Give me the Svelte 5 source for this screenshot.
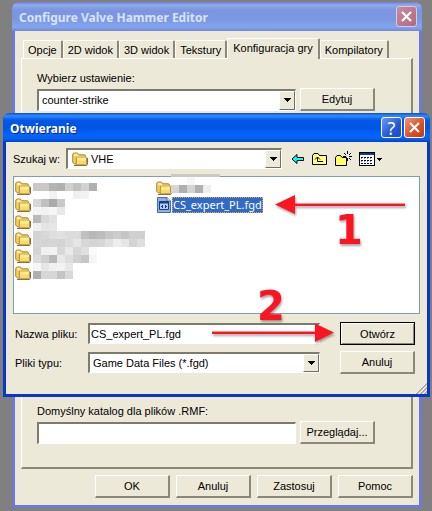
<script>
  const tabs = ['Opcje', '2D widok', '3D widok', 'Tekstury', 'Konfiguracja gry', 'Kompilatory'];
  const footer = ['OK', 'Anuluj', 'Zastosuj', 'Pomoc'];
  let activeTab = 'Konfiguracja gry';
  let rmfDir = '';
  let mapDir = '';
  let fileName = 'CS_expert_PL.fgd';

  // grey levels of the blurred names, one 8px cell each
  const leftCells = [
    'c8 c8 b4 b0 d0 c2 d2 b0',
    '-- -- f2 -- -- f0 f2',
    'd8 c0 aa c8',
    'f4 f2 f6 e8',
    'b8 d8 e2',
    'f0 e4 e6',
    'd4 d8 de e0 dc dc c0 b8 bc c6 cc c6 d0 d0',
    'd6 d4 d6 d4 dc e6 d8 d4 d6 e0 ee e6 d4 de',
    'd4 f0 f2 d8 e8 d6 e0 fa',
    'dc d0 b8 e8 de d0 c6 f6',
    'f6 e6 f0 f2 e8',
    'b0 d6 d6 c4 d8'
  ];
  const rightCells = [
    '-- -- f6 -- --',
    'd6 b0 d4 b0 ee'
  ];

  function toRects(rows) {
    return rows.flatMap((row, y) =>
      row.split(' ')
        .map((c, x) => ({ x: x * 8, y: y * 8, c }))
        .filter((cell) => cell.c != '--')
        .map((cell) => ({ ...cell, fill: '#' + cell.c + cell.c + cell.c }))
    );
  }

  const leftRects = toRects(leftCells);
  const rightRects = toRects(rightCells);
</script>

{#snippet folder()}
  <svg class="icon" width="16" height="16" viewBox="0 0 16 16" aria-hidden="true">
    <path d="M2 14.5H14.5L15.5 13V7" fill="none" stroke="#7a6a48" />
    <path d="M.7 4Q.7 2 2.4 2H5.4L7 3.8H12.2Q13.4 3.8 13.4 5.2V12.8H2.4L.7 11.4Z" fill="#f3cf55" stroke="#a5853c" />
    <path d="M2 3.4H5M2 4.6H6" stroke="#fff0a8" />
    <path d="M4.4 6.3H14.6V12.8L13.6 13.8H4.2Z" fill="#fbd968" stroke="#b88d30" />
    <path d="M5 7H14M5 8H14M5 9H13" stroke="#fff2a8" />
  </svg>
{/snippet}

{#snippet arrow()}
  <span class="drop" aria-hidden="true">
    <svg width="7" height="4" viewBox="0 0 7 4" shape-rendering="crispEdges"><path d="M0 0H7L3.5 4Z" /></svg>
  </span>
{/snippet}

{#snippet cross()}
  <svg width="13" height="13" viewBox="0 0 13 13" aria-hidden="true">
    <path d="M2 2L11 11M11 2L2 11" stroke="#fff" stroke-width="2.2" />
  </svg>
{/snippet}

<main>
  <section class="window back">
    <header>
      <h1>Configure Valve Hammer Editor</h1>
      <button class="caption dim" aria-label="Zamknij">{@render cross()}</button>
    </header>
    <div class="content">
      <div class="tabs" role="tablist">
        {#each tabs as tab}
          <button role="tab" class:active={tab == activeTab} aria-selected={tab == activeTab} on:click={() => (activeTab = tab)}>{tab}</button>
        {/each}
      </div>
      <div class="panel">
        <div class="group">
          <label for="preset">Wybierz ustawienie:</label>
          <div class="row">
            <div class="combo">
              <select id="preset"><option>counter-strike</option></select>
              {@render arrow()}
            </div>
            <button class="btn">Edytuj</button>
          </div>
        </div>
        <div class="group">
          <div class="row dirs">
            <input type="text" aria-label="Katalog" bind:value={mapDir} />
            <button class="btn" aria-label="Katalog"></button>
          </div>
          <label for="rmf">Domyślny katalog dla plików .RMF:</label>
          <div class="row">
            <input id="rmf" type="text" bind:value={rmfDir} />
            <button class="btn">Przeglądaj...</button>
          </div>
        </div>
      </div>
      <div class="footer">
        {#each footer as name}
          <button class="btn">{name}</button>
        {/each}
      </div>
    </div>
  </section>

  <section class="window front">
    <header>
      <h2>Otwieranie</h2>
      <button class="caption help" aria-label="Pomoc">?</button>
      <button class="caption close" aria-label="Zamknij">{@render cross()}</button>
    </header>
    <div class="dialog">
      <div class="lookin">
        <label for="dir">Szukaj w:</label>
        <div class="combo">
          {@render folder()}
          <select id="dir"><option>VHE</option></select>
          {@render arrow()}
        </div>
        <div class="tools">
          <button aria-label="Wstecz">
            <svg width="14" height="12" viewBox="0 0 14 12"><path d="M1 6L6 1.5V4.5H12.5V7.5H6V10.5Z" fill="#0ff" stroke="#000" /></svg>
          </button>
          <button aria-label="W górę">
            <svg width="16" height="14" viewBox="0 0 16 14">
              <path d="M.5 12.5V3.5L2 1.5H6L7.5 3.5H14.5V12.5Z" fill="#ffff80" stroke="#000" />
              <path d="M5.5 5V9.5H11M3 7.5L5.5 5L8 7.5" fill="none" stroke="#000" />
            </svg>
          </button>
          <button aria-label="Nowy folder">
            <svg width="17" height="16" viewBox="0 0 17 16">
              <path d="M.5 14.5V6.5L2 4.5H5.5L7 6.5H11.5V14.5Z" fill="#ffff60" stroke="#000" />
              <path d="M12.5 0V3M12.5 7V10M8 5.5H11M14 5.5H17M9 2L11 4M16 2L14 4M14 7L16 9" stroke="#000" />
            </svg>
          </button>
          <button aria-label="Widok">
            <svg width="24" height="14" viewBox="0 0 24 14" shape-rendering="crispEdges">
              <path d="M.5 .5H15.5V13.5H.5Z" fill="#fff" stroke="#000" />
              <path d="M1 1H15V3H1Z" fill="#123a90" />
              <path d="M2 5.5H14M2 8.5H14M2 11.5H14" stroke="#000060" stroke-dasharray="2 1" />
              <path d="M2 6.5H14M2 9.5H14" stroke="#8088b8" stroke-dasharray="1 2" />
              <path d="M18 6H23L20.5 9Z" />
            </svg>
          </button>
        </div>
      </div>

      <div class="list">
        <ul>
          {#each Array(6) as _}
            <li>{@render folder()}</li>
          {/each}
        </ul>
        <ul>
          <li>{@render folder()}</li>
          <li>
            <svg class="icon" width="16" height="16" viewBox="0 0 16 16" aria-hidden="true">
              <path d="M1.5 .5H11L14.5 4V15.5H1.5Z" fill="#8fb0e4" stroke="#4a6aa4" />
              <path d="M11 .5V4H14.5" fill="#dce8fa" stroke="#4a6aa4" />
              <path d="M3.5 4.5H12.5V12.5H3.5Z" fill="#b4cbf2" stroke="#173d87" />
              <path d="M3 5.5H13" stroke="#173d87" stroke-width="2" />
              <path d="M5 9.5H7M9 9.5H11M6.5 8V11M9.5 8V11" stroke="#173d87" />
            </svg>
            <span class="selected">{fileName}</span>
          </li>
        </ul>
        <svg class="blur left" width="112" height="96" shape-rendering="crispEdges" aria-hidden="true">
          {#each leftRects as r}
            <rect x={r.x} y={r.y} width="8" height="8" fill={r.fill} />
          {/each}
        </svg>
        <svg class="blur right" width="49" height="19" shape-rendering="crispEdges" aria-hidden="true">
          <rect width="49" height="3" fill="#c9cac4" />
          <g transform="translate(0 3)">
            {#each rightRects as r}
              <rect x={r.x} y={r.y} width="8" height="8" fill={r.fill} />
            {/each}
          </g>
        </svg>
      </div>

      <div class="fields">
        <label for="name">Nazwa pliku:</label>
        <input id="name" type="text" bind:value={fileName} />
        <button class="btn default">Otwórz</button>
        <label for="type">Pliki typu:</label>
        <div class="combo">
          <select id="type"><option>Game Data Files (*.fgd)</option></select>
          {@render arrow()}
        </div>
        <button class="btn">Anuluj</button>
      </div>
    </div>
    <svg class="grip" width="12" height="12" viewBox="0 0 12 12" aria-hidden="true">
      <path d="M1 12L12 1M5 12L12 5M9 12L12 9" stroke="#a8a598" stroke-width="2" />
      <path d="M0 12L12 0M4 12L12 4M8 12L12 8" stroke="#fff" />
    </svg>
  </section>

  <!-- numbered steps -->
  <svg class="steps" width="432" height="511" viewBox="0 0 432 511">
    <g fill="#fc1420">
      <path d="M275 204.5L295 195V203.5H405V206H295V214Z" />
      <path d="M334 332.5L315 323.5V331.5H212V334H315V342Z" />
      <text x="335" y="244">1</text>
      <text x="257" y="320">2</text>
    </g>
  </svg>
</main>

<style>
  :global(body) {
    margin: 0;
    background: #808080;
  }
  main {
    position: relative;
    padding: 2px 10px 2px 12px;
    font: 11px/14px "Liberation Sans", Arial, sans-serif;
    color: #000;
  }
  button, input, select {
    font: inherit;
    color: inherit;
    border-radius: 0;
    box-sizing: border-box;
    margin: 0;
    padding: 0;
  }
  svg {
    display: block;
    flex: none;
  }
  .window {
    border-radius: 7px 7px 0 0;
    border: 3px solid;
    border-top: 0;
    background: #ece9d8;
  }
  .back {
    border-color: #6f78d4;
  }
  header {
    display: flex;
    align-items: center;
    gap: 2px;
    height: 29px;
    margin: 0 -3px;
    padding: 0 5px 0 7px;
    box-sizing: border-box;
    border-radius: 7px 7px 0 0;
  }
  .back header {
    background: linear-gradient(#6c7fd2, #92aaec 3px, #7b95e0 8px, #7d98e2 18px, #83a6ee 25px, #7386da);
  }
  .front header {
    background: linear-gradient(#0a50d0, #2f8cff 3px, #0458e8 7px, #0054e3 14px, #0464fc 22px, #0460f0 26px, #0340c4);
  }
  h1, h2 {
    flex: 1;
    margin: 0;
    padding-top: 2px;
    font: bold 12px/18px "Noto Sans", "Trebuchet MS", sans-serif;
    color: #d8e4f8;
    white-space: nowrap;
  }
  h2 {
    color: #fff;
    text-shadow: 1px 1px #0a2a80;
  }
  .caption {
    display: flex;
    align-items: center;
    justify-content: center;
    width: 21px;
    height: 21px;
    border: 1px solid #fff;
    border-radius: 3px;
    color: #fff;
    font: 18px/18px "Noto Sans", sans-serif;
  }
  .dim {
    border-color: #c8cdf0;
    background: linear-gradient(135deg, #c88c9c, #b4687c);
  }
  .help {
    background: linear-gradient(135deg, #6d98f4, #2458d4 60%, #1c4ccc);
  }
  .close {
    background: linear-gradient(135deg, #f09478, #dc4c24 60%, #c43c14);
  }
  .content {
    padding: 7px 6px;
  }
  .tabs {
    display: flex;
    align-items: flex-end;
    padding-left: 2px;
  }
  .tabs button {
    height: 18px;
    padding: 0 4px;
    border: 1px solid #fff;
    border-right: 2px solid #8a8878;
    border-bottom: 0;
    border-radius: 2px 2px 0 0;
    background: #ece9d8;
    white-space: nowrap;
  }
  .tabs .active {
    height: 21px;
    margin: 0 0 -1px;
    padding: 0 5px 3px;
    position: relative;
  }
  .panel {
    display: flex;
    flex-direction: column;
    justify-content: space-between;
    min-height: 411px;
    padding: 12px 36px 23px 15px;
    box-sizing: border-box;
    border: 1px solid #fff;
    border-right: 2px solid #8a8878;
    border-bottom: 2px solid #8a8878;
  }
  .group {
    display: flex;
    flex-direction: column;
    gap: 3px;
  }
  .row {
    display: flex;
    align-items: center;
    gap: 4px;
  }
  .dirs {
    margin-bottom: 4px;
  }
  input, .combo {
    flex: 1;
    min-width: 0;
    height: 22px;
    box-sizing: border-box;
    border: 1px solid #fff;
    border-top: 2px solid #7d7b6e;
    border-left: 2px solid #7d7b6e;
    background: #fff;
    outline: 0;
  }
  input {
    padding: 0 1px;
  }
  .combo {
    display: flex;
    align-items: center;
  }
  select {
    flex: 1;
    min-width: 0;
    height: 18px;
    padding-left: 3px;
    border: 0;
    outline: 0;
    background: none;
    appearance: none;
  }
  .drop {
    display: flex;
    align-items: center;
    justify-content: center;
    align-self: stretch;
    width: 16px;
    box-sizing: border-box;
    border: 1px solid #fff;
    border-right-color: #716f64;
    border-bottom-color: #716f64;
    background: #ece9d8;
  }
  .btn {
    flex: none;
    width: 75px;
    height: 23px;
    border: 1px solid #fff;
    border-right: 2px solid #8a8878;
    border-bottom: 2px solid #8a8878;
    background: #ece9d8;
  }
  .default {
    border: 1px solid #000;
    box-shadow: inset 1px 1px #fff, inset -1px -1px #8a8878;
  }
  .footer {
    display: flex;
    justify-content: flex-end;
    gap: 6px;
    padding-top: 6px;
  }

  .front {
    position: absolute;
    top: 113px;
    left: 3px;
    right: 2px;
    border-color: #0838c8;
  }
  .dialog {
    padding: 6px 7px 20px;
  }
  .lookin {
    display: flex;
    align-items: center;
    height: 21px;
  }
  .lookin label {
    width: 53px;
  }
  .lookin .combo {
    height: 21px;
    padding-left: 4px;
  }
  .tools {
    display: flex;
    align-items: center;
    gap: 7px;
    width: 129px;
    padding-left: 9px;
  }
  .tools button {
    border: 0;
    background: none;
  }
  .list {
    position: relative;
    display: flex;
    height: 138px;
    margin-top: 7px;
    box-sizing: border-box;
    border: 1px solid #7f9db9;
    background: #fff;
  }
  .list ul {
    width: 140px;
    margin: 0;
    padding: 2px 0 0 1px;
    list-style: none;
  }
  .list li {
    display: flex;
    align-items: center;
    height: 17px;
  }
  .selected {
    padding: 0 1px;
    outline: 1px dotted #d8a860;
    outline-offset: -1px;
    background: #316ac5;
    color: #fff;
    font: 11px/16px "Noto Sans", Tahoma, sans-serif;
  }
  .blur {
    position: absolute;
  }
  .left {
    top: 6px;
    left: 19px;
  }
  .right {
    top: -3px;
    left: 157px;
  }
  .fields {
    display: grid;
    grid-template-columns: 73px 1fr 75px;
    align-items: center;
    row-gap: 6px;
    padding: 8px 5px 0 2px;
  }
  .fields input, .fields .combo {
    height: 21px;
    margin-right: 20px;
  }
  .grip {
    position: absolute;
    right: 0;
    bottom: 0;
  }
  .steps {
    position: absolute;
    top: 0;
    left: 0;
    pointer-events: none;
    filter: drop-shadow(1px 2px 1px rgba(0, 0, 0, 0.35));
  }
  .steps text {
    font: bold 40px "DejaVu Sans", Verdana, sans-serif;
  }
</style>
